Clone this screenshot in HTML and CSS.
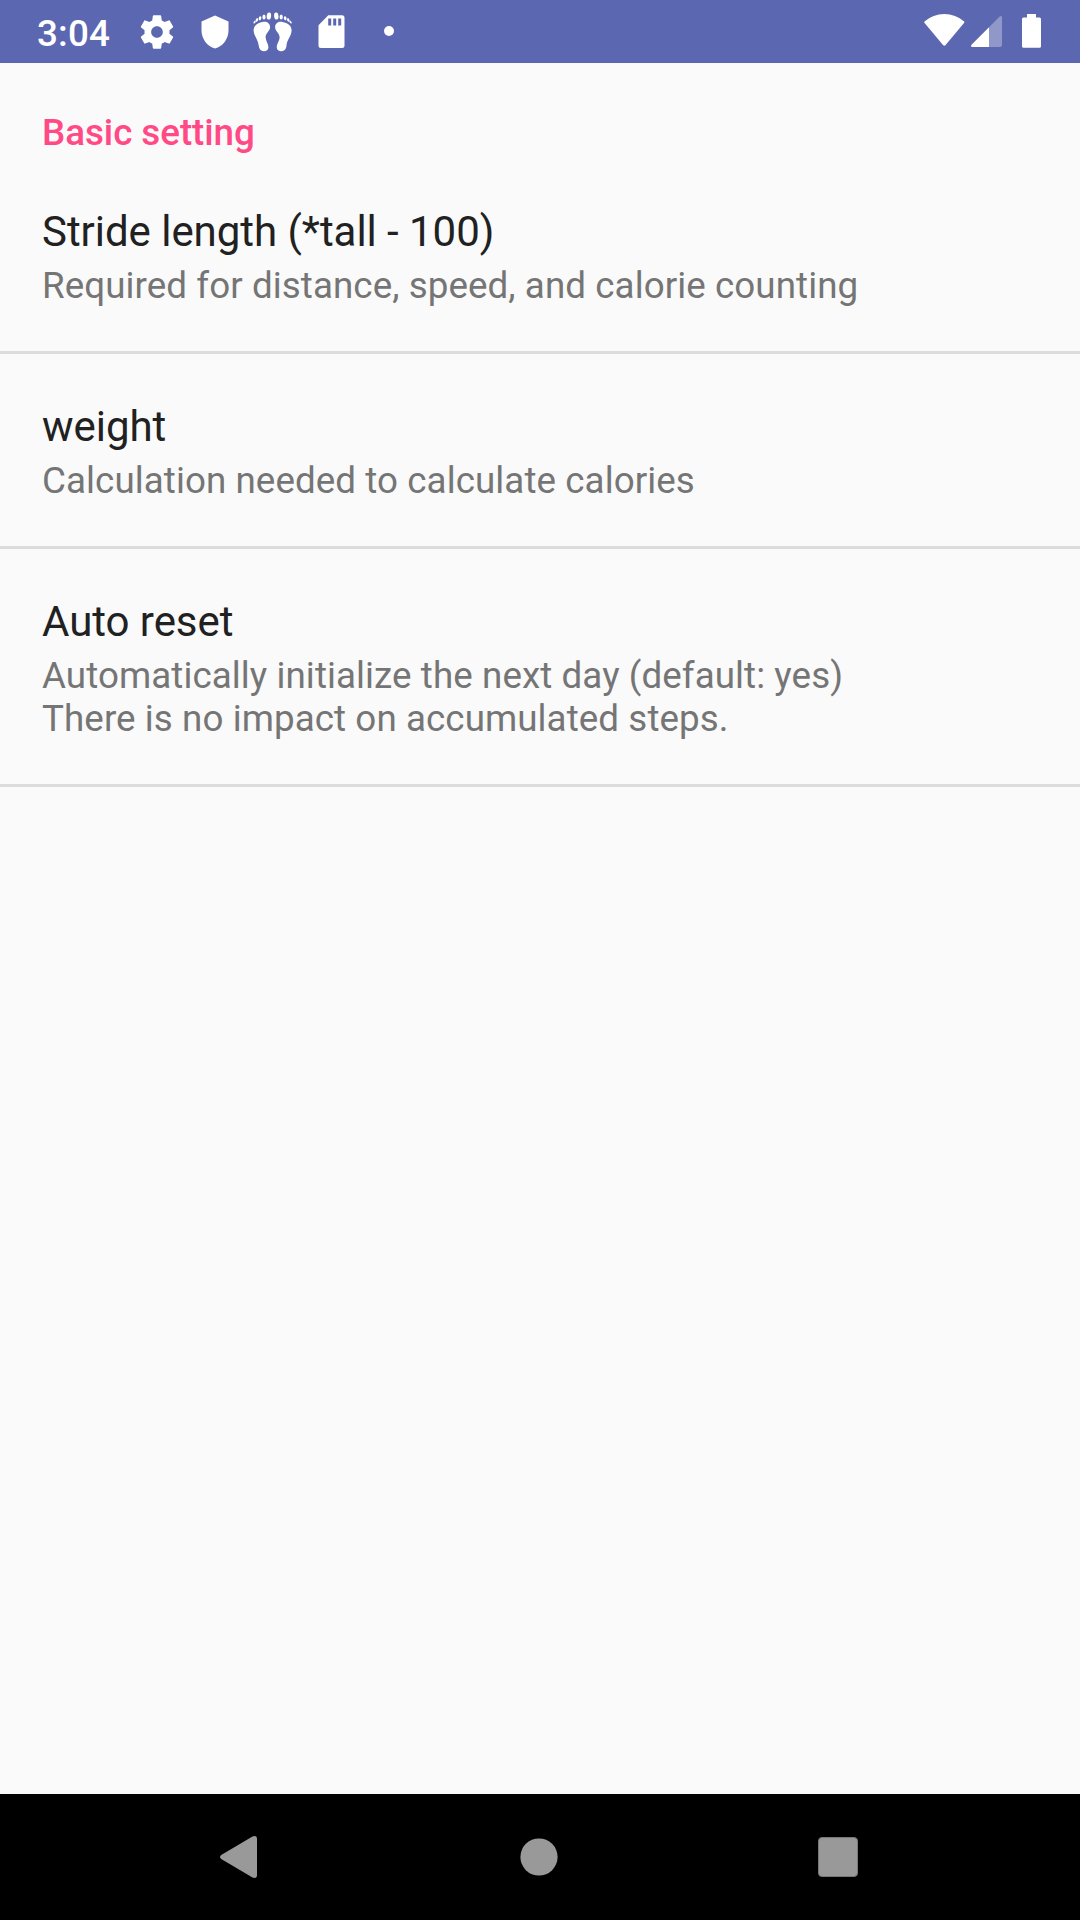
FILE: index.html
```html
<!DOCTYPE html>
<html lang="en">
<head>
<meta charset="utf-8">
<title>Settings</title>
<link rel="stylesheet" href="styles.css">
</head>
<body>
<div class="screen">
  <header class="status-bar">
    <div class="status-group">
      <span class="clock">3:04</span>
      <svg class="gear" width="40" height="40" viewBox="0 0 24 24"><path d="M19.43 12.98c.04-.32.07-.64.07-.98s-.03-.66-.07-.98l2.11-1.65c.19-.15.24-.42.12-.64l-2-3.46c-.12-.22-.39-.3-.61-.22l-2.49 1c-.52-.4-1.08-.73-1.69-.98l-.38-2.65C14.46 2.18 14.25 2 14 2h-4c-.25 0-.46.18-.49.42l-.38 2.65c-.61.25-1.17.59-1.69.98l-2.49-1c-.23-.09-.49 0-.61.22l-2 3.46c-.13.22-.07.49.12.64l2.11 1.65c-.04.32-.07.65-.07.98s.03.66.07.98l-2.11 1.65c-.19.15-.24.42-.12.64l2 3.46c.12.22.39.3.61.22l2.49-1c.52.4 1.08.73 1.69.98l.38 2.65c.03.24.24.42.49.42h4c.25 0 .46-.18.49-.42l.38-2.65c.61-.25 1.17-.59 1.69-.98l2.49 1c.23.09.49 0 .61-.22l2-3.46c.12-.22.07-.49-.12-.64l-2.11-1.65zM12 15.500c-1.930 0-3.500-1.570-3.500-3.500s1.570-3.500 3.500-3.500 3.500 1.570 3.500 3.500-1.570 3.500-3.500 3.500z"/></svg>
      <svg class="shield" width="36" height="36" viewBox="0 0 24 24"><path d="M12 1L3 5v6c0 5.550 3.840 10.740 9 12 5.160-1.260 9-6.450 9-12V5l-9-4z"/></svg>
      <svg class="feet" width="39" height="40" viewBox="0 0 39 40">
        <g id="foot">
          <path d="M9.500 10C13.800 9.200 17 11.200 17.100 15.200C17.200 18.800 12.800 21 12.600 25C12.500 29 15.600 31.500 15.400 35.500C15.200 38.300 13.200 39.300 10.800 39.200C7.500 39.100 6 37 5.700 33.500C5.300 28 .8 24 .6 18.500C.5 13.500 4.800 10.900 9.500 10Z"/>
          <ellipse cx="15.900" cy="4" rx="2.200" ry="3.600" transform="rotate(6 15.900 4)"/>
          <ellipse cx="11" cy="5" rx="1.600" ry="2.500"/>
          <ellipse cx="7" cy="6.300" rx="1.350" ry="2.100" transform="rotate(12 7 6.300)"/>
          <ellipse cx="3.900" cy="8" rx="1.150" ry="1.850" transform="rotate(22 3.900 8)"/>
          <ellipse cx="1.600" cy="10.100" rx=".9" ry="1.500" transform="rotate(30 1.600 10.100)"/>
        </g>
        <use href="#foot" transform="translate(39.200 0) scale(-1 1)"/>
      </svg>
      <svg class="sdcard" width="27" height="34" viewBox="0 0 27 34"><path fill-rule="evenodd" d="M10.300.3H24Q26.500.3 26.500 3V30.500Q26.500 33 24 33H3Q.5 33 .5 30.500V10.200ZM10.200 3.500V10.500H13.200V3.500ZM15.200 3.500V10.500H18.200V3.500ZM20.200 3.500V10.500H23.200V3.500Z"/></svg>
      <svg class="dot" width="10" height="10" viewBox="0 0 10 10"><circle cx="5" cy="5" r="5"/></svg>
    </div>
    <div class="status-group">
      <svg class="wifi" width="41" height="32" viewBox="0 0 41 32"><path d="M.5 7.500Q9 0 20.300 0T40.200 7.500Q40.600 8.200 40 9L21.600 31Q20.300 32.300 19 31L.6 9Q0 8.200.5 7.500Z"/></svg>
      <svg class="signal" width="31" height="31" viewBox="0 0 31 31"><path class="faint" d="M18 11.300L28.700.6Q31 -.8 31 1.800V29Q31 31 29 31H18Z"/><path d="M18 11.300V31H1.500Q-.8 30.800.5 28.700Z"/></svg>
      <svg class="battery" width="19" height="34" viewBox="0 0 19 34"><path d="M5 0H14V3.500H17.500Q19 3.500 19 5V32.300Q19 33.800 17.500 33.800H1.500Q0 33.800 0 32.300V5Q0 3.500 1.500 3.500H5Z"/></svg>
    </div>
  </header>
  <main class="settings">
    <h1 class="category">Basic setting</h1>
    <section class="row">
      <div class="title">Stride length (*tall - 100)</div>
      <div class="summary">Required for distance, speed, and calorie counting</div>
    </section>
    <section class="row">
      <div class="title">weight</div>
      <div class="summary">Calculation needed to calculate calories</div>
    </section>
    <section class="row">
      <div class="title">Auto reset</div>
      <div class="summary">Automatically initialize the next day (default: yes)<br>There is no impact on accumulated steps.</div>
    </section>
  </main>
  <nav class="nav-bar">
    <svg class="back" width="37" height="42" viewBox="0 0 37 42"><path d="M1.200 19L32.500.4Q37-1 37 3V39Q37 43 32.500 41.600L1.200 23Q-1.200 21 1.200 19Z"/></svg>
    <svg class="home" width="38" height="38" viewBox="0 0 38 38"><circle cx="19" cy="19" r="18.600"/></svg>
    <div class="recents"></div>
  </nav>
</div>
</body>
</html>
```
FILE: styles.css
```css
body {
  margin: 0;
  font-family: Roboto, sans-serif;
}

.screen {
  display: flex;
  flex-direction: column;
  width: 1080px;
  height: 1920px;
  background: #fafafa;
}

.status-bar {
  display: flex;
  justify-content: space-between;
  height: 63px;
  padding: 0 39px 0 37px;
  background: #5c67b2;
  color: #fff;
  fill: #fff;
}

.status-group {
  display: flex;
  align-items: flex-start;
}

.clock {
  width: 100px;
  margin-top: 12px;
  font-size: 36.75px;
  font-weight: 500;
  line-height: 43px;
  letter-spacing: .2px;
}

.gear { margin-top: 11.500px; }
.shield { margin: 13.500px 0 0 20px; }
.feet { margin: 12px 0 0 20px; }
.sdcard { margin: 15px 0 0 26px; }
.dot { margin: 26px 0 0 39px; }
.wifi { margin-top: 14px; }
.signal { margin: 16px 0 0 6px; }
.battery { margin: 14px 0 0 20px; }
.faint { fill-opacity: .32; }

.settings {
  flex: 1;
  padding-top: 48px;
}

.category {
  margin: 0 42px 5px;
  color: #ff4a86;
  font-size: 36.75px;
  font-weight: 500;
  line-height: 43px;
  letter-spacing: -.04px;
}

.row {
  padding: 48px 42px 44px;
  border-bottom: 3px solid #dcdcdc;
}

.title {
  margin-bottom: 8px;
  color: #212121;
  font-size: 42px;
  line-height: 49px;
  letter-spacing: -.04px;
}

.summary {
  color: #757575;
  font-size: 36.75px;
  line-height: 43px;
  letter-spacing: .075px;
}

.nav-bar {
  display: flex;
  align-items: flex-start;
  justify-content: space-between;
  height: 126px;
  padding: 0 222px 0 220px;
  background: #000;
  fill: #999;
}

.back { margin-top: 42px; }
.home { margin: 43.500px 0 0 3px; }

.recents {
  box-sizing: border-box;
  width: 40px;
  height: 40px;
  margin-top: 43px;
  border: 1px solid #777;
  border-radius: 4px;
  background: #999;
}
```
